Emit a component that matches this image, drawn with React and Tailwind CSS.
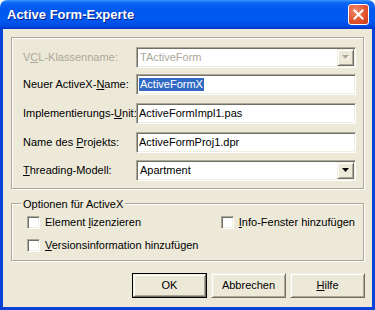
const sunken = 'border border-t-[#ACA899] border-l-[#ACA899] border-b-white border-r-white shadow-[inset_1px_1px_0_#716F64,inset_-1px_-1px_0_#F1EFE2]';
const raised = 'border border-t-[#F1EFE2] border-l-[#F1EFE2] border-b-[#716F64] border-r-[#716F64] shadow-[inset_1px_1px_0_#fff,inset_-1px_-1px_0_#ACA899]';

const Edit = ({ children }) => (
    <div className={`shrink-0 w-[220px] h-[21px] bg-white flex items-center pl-[2px] whitespace-nowrap ${sunken}`}>
        {children}
    </div>
);

const Combo = ({ value, disabled }) => (
    <div className={`shrink-0 w-[220px] h-[21px] bg-white flex items-center ${sunken}`}>
        <span className={`flex-1 pl-[3px] ${disabled ? 'text-[#ACA899]' : 'text-black'}`}>{value}</span>
        <div className={`w-[17px] h-[17px] mr-[1px] bg-[#ECE9D8] flex items-center justify-center ${raised}`}>
            <svg width="8" height="5" viewBox="0 0 8 5">
                {disabled && <path d="M1 1h7l-3.5 4z" fill="#fff" />}
                <path d="M0 0h7l-3.5 4z" fill={disabled ? '#ACA899' : '#000'} />
            </svg>
        </div>
    </div>
);

const Row = ({ label, disabled, children, className }) => (
    <div className={`flex items-center h-[21px] ${className}`}>
        <span className={`flex-1 min-w-0 whitespace-nowrap ${disabled ? 'text-[#ACA899]' : 'text-black'}`}>{label}</span>
        {children}
    </div>
);

const Check = ({ children, className }) => (
    <div className={`flex items-center h-[13px] whitespace-nowrap ${className}`}>
        <div className={`w-[13px] h-[13px] bg-white ${sunken}`} />
        <span className="ml-[5px]">{children}</span>
    </div>
);

const Button = ({ children, isDefault }) => (
    <div className={`w-[75px] h-[25px] ${isDefault ? 'border border-black' : ''}`}>
        <div className={`w-full h-full flex items-center justify-center bg-[#ECE9D8] ${raised}`}>
            {children}
        </div>
    </div>
);

export default function App() {
    return (
        <div
            className="w-[375px] h-[310px] flex flex-col text-[11px] text-black"
            style={{ fontFamily: '"Liberation Sans", Arial, sans-serif' }}
        >
            {/* title bar */}
            <div className="h-[29px] rounded-t-[7px] flex items-center pl-[7px] pr-[6px] bg-[linear-gradient(to_bottom,#3D95FF_0%,#0A66F5_10%,#0058EE_35%,#005BF2_65%,#004DE6_88%,#0033C8_100%)]">
                <span className="text-white font-bold text-[13px] [text-shadow:1px_1px_0_#0A1E8C]">
                    Active Form-Experte
                </span>
                <div className="ml-auto w-[21px] h-[21px] rounded-[3px] border border-white flex items-center justify-center bg-[radial-gradient(circle_at_35%_30%,#F08A6E_0%,#E2542F_55%,#C63C1A_100%)]">
                    <svg width="11" height="11" viewBox="0 0 11 11">
                        <path d="M1.5 1.5l8 8M9.5 1.5l-8 8" stroke="#fff" strokeWidth="2" strokeLinecap="square" />
                    </svg>
                </div>
            </div>

            {/* client */}
            <div className="flex-1 bg-[#ECE9D8] border-x-[3px] border-b-[3px] border-[#0842D8] px-[8px] pt-[8px]">
                <div className="h-[152px] border border-[#ACA899] shadow-[inset_1px_1px_0_#fff,1px_1px_0_#fff] pl-[11px] pr-[7px] pt-[9px]">
                    <Row label={<>V<u>C</u>L-Klassenname:</>} disabled>
                        <Combo value="TActiveForm" disabled />
                    </Row>
                    <Row label={<>Neuer ActiveX-<u>N</u>ame:</>} className="mt-[6px]">
                        <Edit>
                            <span className="bg-[#316AC5] text-white leading-[13px] px-[1px]">ActiveFormX</span>
                        </Edit>
                    </Row>
                    <Row label={<>Implementierungs-<u>U</u>nit:</>} className="mt-[8px]">
                        <Edit>ActiveFormImpl1.pas</Edit>
                    </Row>
                    <Row label={<>Name des <u>P</u>rojekts:</>} className="mt-[8px]">
                        <Edit>ActiveFormProj1.dpr</Edit>
                    </Row>
                    <Row label={<><u>T</u>hreading-Modell:</>} className="mt-[7px]">
                        <Combo value="Apartment" />
                    </Row>
                </div>

                <div className="relative mt-[14px] h-[58px] border border-[#ACA899] shadow-[inset_1px_1px_0_#fff,1px_1px_0_#fff] pl-[15px] pr-[8px] pt-[12px]">
                    <span className="absolute left-[9px] top-[-8px] px-[2px] bg-[#ECE9D8]">Optionen für ActiveX</span>
                    <div className="flex">
                        <Check>Element <u>l</u>izenzieren</Check>
                        <Check className="ml-auto"><u>I</u>nfo-Fenster hinzufügen</Check>
                    </div>
                    <Check className="mt-[10px]"><u>V</u>ersionsinformation hinzufügen</Check>
                </div>

                <div className="flex justify-end gap-[4px] mt-[12px] -mr-[1px]">
                    <Button isDefault>OK</Button>
                    <Button>Abbrechen</Button>
                    <Button><span><u>H</u>ilfe</span></Button>
                </div>
            </div>
        </div>
    );
}
